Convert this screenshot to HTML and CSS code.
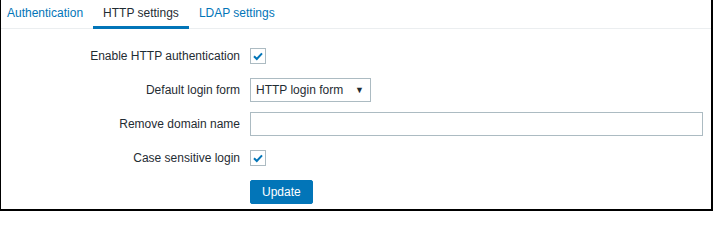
FILE: index.html
```html
<!DOCTYPE html>
<html>
<head>
<meta charset="utf-8">
<link rel="stylesheet" href="styles.css">
</head>
<body>
<div class="frame">
  <ul class="tabs">
    <li class="tab"><a href="#">Authentication</a></li>
    <li class="tab active"><a href="#">HTTP settings</a></li>
    <li class="tab"><a href="#">LDAP settings</a></li>
  </ul>
  <form class="form">
    <label class="label">Enable HTTP authentication</label>
    <div class="field">
      <span class="checkbox"><svg viewBox="0 0 16 16" width="16" height="16"><path d="M4 8.2 L6.8 11 L12 5.4" fill="none" stroke="#0275b8" stroke-width="2"/></svg></span>
    </div>

    <label class="label">Default login form</label>
    <div class="field">
      <span class="select"><span class="select-text">HTTP login form</span><span class="arrow">▼</span></span>
    </div>

    <label class="label">Remove domain name</label>
    <div class="field">
      <span class="input"></span>
    </div>

    <label class="label">Case sensitive login</label>
    <div class="field">
      <span class="checkbox"><svg viewBox="0 0 16 16" width="16" height="16"><path d="M4 8.2 L6.8 11 L12 5.4" fill="none" stroke="#0275b8" stroke-width="2"/></svg></span>
    </div>

    <span class="label"></span>
    <div class="field">
      <button type="button" class="btn">Update</button>
    </div>
  </form>
</div>
</body>
</html>
```

FILE: styles.css
```css
html, body {
  margin: 0;
  padding: 0;
  background: #ffffff;
}
.frame {
  box-sizing: border-box;
  width: 713px;
  height: 211px;
  border-left: 1px solid #000;
  border-right: 2px solid #000;
  border-bottom: 2px solid #000;
  overflow: hidden;
  font-family: "Liberation Sans", Arial, sans-serif;
  font-size: 12px;
  color: #1f2c33;
  background: #fff;
}
.tabs {
  display: flex;
  list-style: none;
  margin: 0;
  padding: 0;
  margin-left: -4px;
  height: 29px;
  box-sizing: border-box;
  border-bottom: 1px solid #ebeef0;
}
.tab {
  box-sizing: border-box;
  height: 29px;
  padding: 6px 10px 0;
  line-height: 14px;
  margin-bottom: -1px;
}
.tab a {
  color: #0275b8;
  text-decoration: none;
}
.tab.active {
  border-bottom: 3px solid #0275b8;
}
.tab.active a {
  color: #1f2c33;
}
.form {
  display: grid;
  grid-template-columns: 239px 453px;
  column-gap: 10px;
  grid-auto-rows: 24px;
  row-gap: 10px;
  padding-top: 15px;
  margin: 0;
}
.label {
  display: flex;
  align-items: center;
  justify-content: flex-end;
  line-height: 14px;
  white-space: nowrap;
}
.field {
  display: flex;
  align-items: center;
}
.checkbox {
  box-sizing: border-box;
  width: 16px;
  height: 16px;
  border: 1px solid #acbbc2;
  background: #fff;
  display: flex;
  align-items: center;
  justify-content: center;
}
.checkbox svg {
  display: block;
  flex: none;
}
.select {
  box-sizing: border-box;
  width: 121px;
  height: 24px;
  border: 1px solid #acbbc2;
  display: flex;
  align-items: center;
  justify-content: space-between;
  padding: 0 6px 0 5px;
  color: #1f2c33;
}
.arrow {
  font-size: 9px;
  line-height: 10px;
  color: #1f2c33;
}
.input {
  box-sizing: border-box;
  width: 453px;
  height: 24px;
  border: 1px solid #acbbc2;
  background: #fff;
}
.btn {
  box-sizing: border-box;
  height: 24px;
  padding: 0 11px;
  border: 1px solid #0275b8;
  background: #0275b8;
  color: #fff;
  border-radius: 2px;
  font-family: "Liberation Sans", Arial, sans-serif;
  font-size: 12px;
  line-height: 14px;
  cursor: pointer;
}
```
